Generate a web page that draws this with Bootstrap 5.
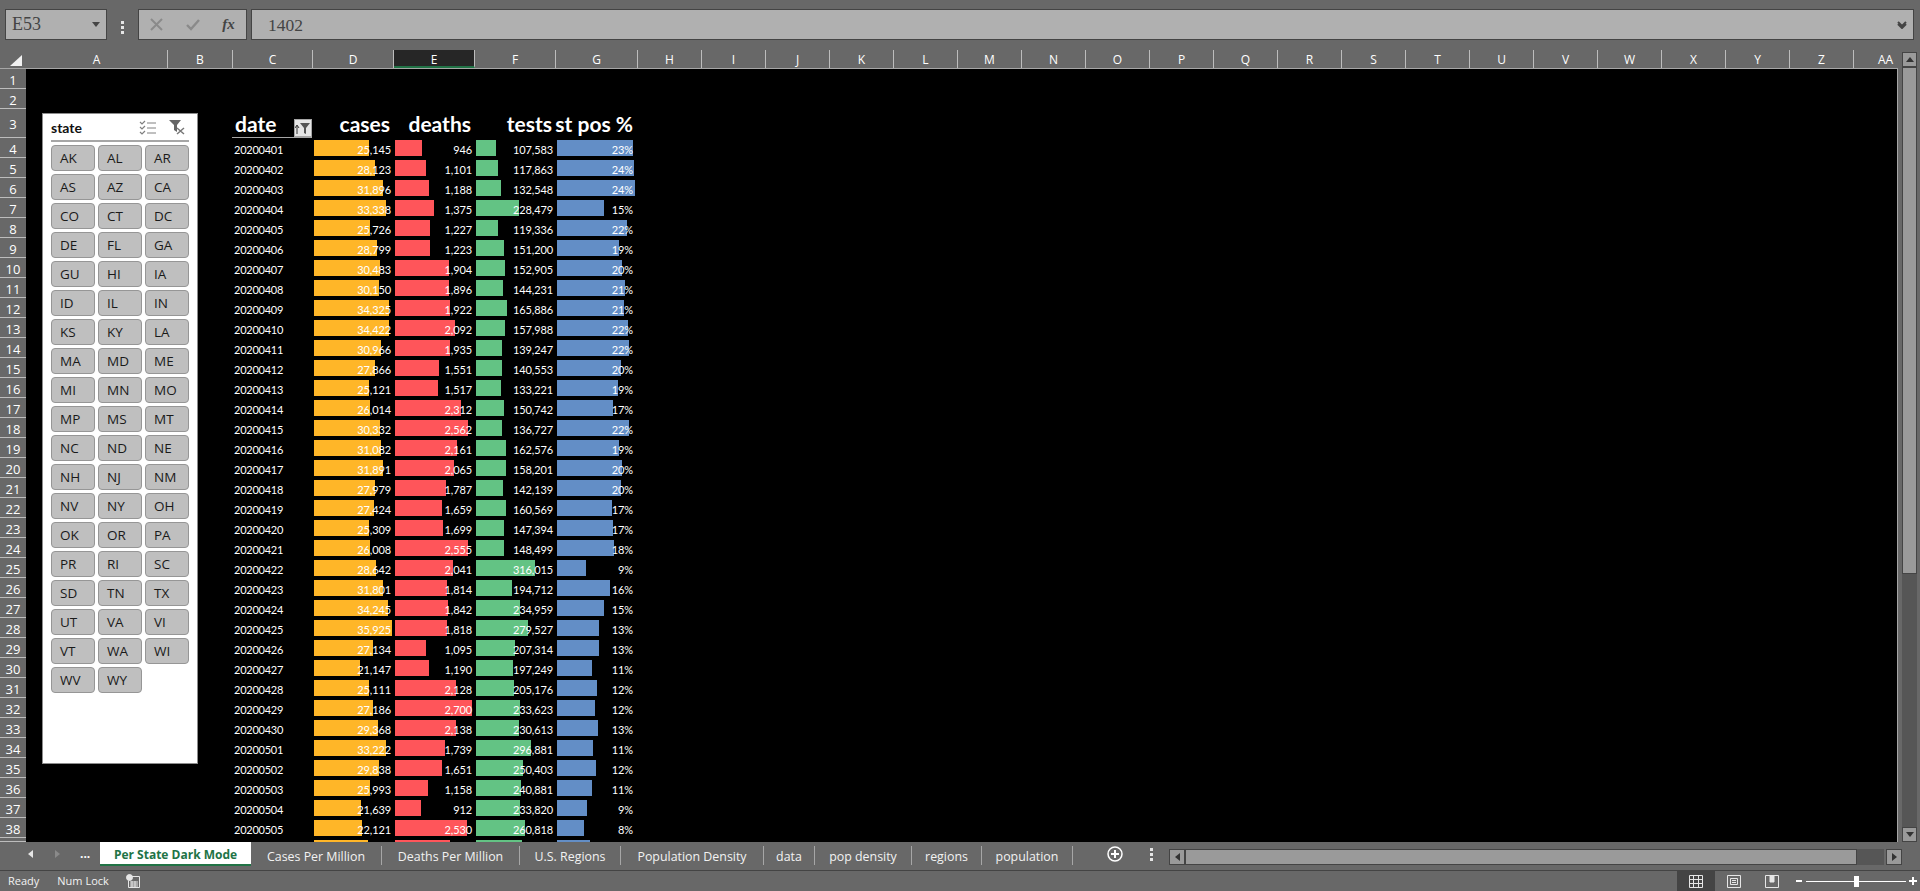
<!DOCTYPE html>
<html lang="en">
<head>
    <meta charset="UTF-8">
    <meta name="viewport" content="width=device-width, initial-scale=1.0">
    <title>Per State Dark Mode</title>
    <link href="https://cdn.jsdelivr.net/npm/bootstrap@5.3.0/dist/css/bootstrap.min.css" rel="stylesheet">
    <style>
        html, body { height: 100%; overflow: hidden; }
        body { background: #686868; color: #fff; font-family: "Open Sans", sans-serif; font-size: 12px; }

        /* formula bar */
        .fbar { height: 50px; padding: 9px 6px 0 5px; }
        .fbox { height: 31px; background: #b0b0b0; border: 1px solid #444; color: #444; }
        .namebox { width: 102px; padding-left: 6px; font: 18px "Liberation Serif", serif; }
        .caret-down { width: 0; height: 0; border: 4px solid transparent; border-top: 5px solid #444; border-bottom: 0; margin-right: 6px; }
        .vdots { width: 31px; }
        .fxbox { width: 109px; margin-right: 4px; }
        .fx-sym { font: italic bold 15px "Liberation Serif", serif; color: #444; }
        .formula { padding-left: 16px; padding-right: 6px; font: 17.5px "Liberation Serif", serif; }
        .formula-val { padding-top: 2px; }

        /* column letters */
        .colhead { height: 19px; border-bottom: 1px solid #a6a6a6; }
        .corner { width: 26px; }
        .col-l { flex: none; text-align: center; border-right: 1px solid #bdbdbd; line-height: 20px; }
        .col-l.is-sel { background: #262626; border-bottom: 2px solid #217346; }
        .col-a { width: 142px; } .col-b { width: 65px; } .col-c { width: 80px; } .col-d { width: 81px; }
        .col-e { width: 81px; } .col-f { width: 81px; } .col-g { width: 82px; } .col-n { width: 64px; }

        /* sheet */
        .sheet { height: 773px; background: #000; border-right: 1px solid #a6a6a6; }
        .xrow { height: 20px; }
        .xrow.is-head { height: 29px; }
        .xrow.is-cut { height: 4px; }
        .rownum { flex: none; width: 26px; height: 100%; background: #686868; border-bottom: 1px solid #bdbdbd; text-align: center; font-size: 13px; line-height: 22px; }
        .is-head .rownum { line-height: 30px; }
        .spacer { flex: none; width: 206px; }
        .cell { flex: none; text-align: right; padding-right: 2px; white-space: nowrap; font: 11px/23px Lato, sans-serif; letter-spacing: -.1px; background-repeat: no-repeat; background-position: 2px 2px; }
        .c-date { width: 80px; padding-left: 2px; text-align: left; letter-spacing: -.25px; }
        .c-cases { width: 81px; background-image: linear-gradient(#ffb628, #ffb628); }
        .c-deaths { width: 81px; background-image: linear-gradient(#ff555a, #ff555a); }
        .c-tests { width: 81px; background-image: linear-gradient(#63c384, #63c384); }
        .c-pos { width: 82px; padding-right: 4px; background-image: linear-gradient(#638ec6, #638ec6); }
        .hcell { flex: none; font: bold 21px/30px Lato, sans-serif; text-align: right; padding-right: 3px; white-space: nowrap; }
        .h-date { width: 80px; border-bottom: 1px solid #a6a6a6; padding: 0 0 0 3px; }
        .h-date-label { margin-bottom: -2px; }
        .h-pos { width: 82px; padding-right: 4px; }
        .filter-btn { width: 18px; height: 18px; background: #e6e6e6; border: 1px solid #a6a6a6; }

        /* slicer */
        .slicer { position: absolute; left: 42px; top: 44px; width: 156px; height: 651px; background: #fff; border: 1px solid #8c8c8c; padding: 0 8px; }
        .slicer-head { height: 28px; border-bottom: 2px solid #a6a6a6; color: #111; font: bold 14px Lato, sans-serif; }
        .slicer-tools { gap: 13px; }
        .slicer-grid { display: grid; grid-template-columns: repeat(3, 1fr); grid-auto-rows: 26px; gap: 3px 3px; margin-top: 3px; }
        .slicer-btn { background: #bfbfbf; border: 1px solid #969696; border-radius: 4px; color: #1a1a1a; font: 13.5px/1 "Open Sans", sans-serif; text-align: left; padding: 2px 0 0 8px; }

        /* vertical scrollbar */
        .vscroll { flex: none; width: 22px; padding: 2px 3px 0 4px; height: 792px; }
        .sb-btn { background: #9a9a9a; border: 1px solid #444; }
        .sb-v { height: 15px; }
        .sb-thumb { height: 507px; background: #9a9a9a; border: 1px solid #444; }
        .sb-trough { background: #565656; }
        .tri { width: 0; height: 0; border: 4px solid transparent; }
        .tri-up { border-bottom: 5px solid #333; border-top: 0; }
        .tri-down { border-top: 5px solid #333; border-bottom: 0; }
        .tri-left { border-right: 5px solid #333; border-left: 0; }
        .tri-right { border-left: 5px solid #333; border-right: 0; }

        /* tabs */
        .tabbar { height: 29px; border-bottom: 1px solid #444; }
        .tabnav { width: 100px; height: 24px; }
        .tabnav .tri-left { margin-left: 28px; margin-right: 22px; border-right-color: #e6e6e6; }
        .tabnav .tri-right { margin-right: 20px; border-left-color: #8a8a8a; }
        .xtabs { height: 24px; }
        .xtab { flex: none; height: 19px; margin-top: 4px; border-right: 1px solid #a6a6a6; text-align: center; line-height: 22px; white-space: nowrap; color: #f2f2f2; font-size: 12.4px; }
        .xtab.is-on { height: 24px; margin-top: 0; width: 151px; background: #fff; color: #217346; font-size: 12px; font-weight: 700; border-right: 0; border-bottom: 2px solid #217346; line-height: 26px; }
        .xtab:nth-child(2) { width: 131px; } .xtab:nth-child(3) { width: 138px; } .xtab:nth-child(4) { width: 101px; }
        .xtab:nth-child(5) { width: 143px; } .xtab:nth-child(6) { width: 51px; } .xtab:nth-child(7) { width: 97px; }
        .xtab:nth-child(8) { width: 70px; } .xtab:nth-child(9) { width: 91px; }
        .tabtools { width: 96px; height: 24px; }
        .tab-plus { margin-left: 34px; }
        .tab-dots { margin-left: 27px; }
        .hscroll { height: 16px; margin-top: 7px; }
        .sb-h { width: 16px; height: 16px; flex: none; }
        .hthumb { width: 672px; flex: none; height: 16px; background: #9a9a9a; border: 1px solid #444; }
        .htrough { width: 27px; flex: none; height: 16px; background: #565656; margin-right: 2px; }

        /* status bar */
        .statusbar { height: 20px; padding-left: 8px; font-size: 11px; color: #f2f2f2; }
        .stat-lock { margin-left: 18px; }
        .stat-rec { margin-left: 17px; }
        .stat-views { margin-left: auto; }
        .viewbtn { width: 38px; height: 20px; flex: none; }
        .viewbtn.is-on { background: #444; }
        .zoom-minus { margin-left: 5px; }
        .zoomtrack { width: 100px; height: 1px; background: #fff; margin: 0 3px 0 4px; }
        .zoomthumb { position: absolute; left: 48px; top: -5px; width: 5px; height: 11px; background: #fff; }
        .zoom-plus { margin-right: 3px; }
    </style>
</head>
<body class="d-flex flex-column">
    <div class="fbar d-flex flex-shrink-0">
        <div class="fbox namebox d-flex align-items-center justify-content-between"><span>E53</span><span class="caret-down"></span></div>
        <div class="vdots d-flex align-items-center justify-content-center pb-1">
            <svg width="3" height="13" fill="#e6e6e6"><rect width="3" height="3"/><rect y="5" width="3" height="3"/><rect y="10" width="3" height="3"/></svg>
        </div>
        <div class="fbox fxbox d-flex align-items-center justify-content-around">
            <svg width="13" height="13" stroke="#8a8a8a" stroke-width="2" fill="none"><path d="M1 1l11 11M12 1L1 12"/></svg>
            <svg width="14" height="13" stroke="#8a8a8a" stroke-width="2.4" fill="none"><path d="M1 7l4 4 8-9"/></svg>
            <span class="fx-sym">fx</span>
        </div>
        <div class="fbox formula flex-grow-1 d-flex align-items-center justify-content-between">
            <span class="formula-val">1402</span>
            <svg width="10" height="8" stroke="#444" stroke-width="2" fill="none"><path d="M1 1l4 4 4-4M1 3l4 4 4-4"/></svg>
        </div>
    </div>

    <div class="d-flex flex-shrink-0">
        <div class="flex-grow-1 overflow-hidden">
            <div class="colhead d-flex" id="colhead">
                <div class="corner flex-shrink-0 d-flex justify-content-end align-items-start pt-1 pe-1">
                    <svg width="13" height="12" fill="#f2f2f2"><path d="M13 1v11H1z"/></svg>
                </div>
            </div>
            <div class="sheet position-relative overflow-hidden" id="sheet">
                <div class="slicer">
                    <div class="slicer-head d-flex align-items-center justify-content-between">
                        <span>state</span>
                        <span class="slicer-tools d-flex align-items-center pe-1">
                            <svg width="17" height="15" fill="none" stroke="#808080"><path d="M1 2l2 2 3-3M1 7l2 2 3-3M1 12l2 2 3-3" stroke-width="1.2"/><path d="M8 3h9M8 8h9M8 13h9"/></svg>
                            <svg width="16" height="16"><path d="M0 1h12L8 6v7l-3-2V6z" fill="#666"/><path d="M8 9l7 6M15 9l-7 6" stroke="#777" stroke-width="1.5"/></svg>
                        </span>
                    </div>
                    <div class="slicer-grid" id="states"></div>
                </div>
            </div>
        </div>
        <div class="vscroll d-flex flex-column">
            <div class="sb-btn sb-v d-flex align-items-center justify-content-center"><span class="tri tri-up"></span></div>
            <div class="sb-thumb"></div>
            <div class="sb-trough flex-grow-1"></div>
            <div class="sb-btn sb-v d-flex align-items-center justify-content-center"><span class="tri tri-down"></span></div>
        </div>
    </div>

    <div class="tabbar d-flex flex-shrink-0">
        <div class="tabnav d-flex align-items-center">
            <span class="tri tri-left"></span>
            <span class="tri tri-right"></span>
            <span class="fw-bold">...</span>
        </div>
        <div class="xtabs d-flex">
            <div class="xtab is-on">Per State Dark Mode</div>
            <div class="xtab">Cases Per Million</div>
            <div class="xtab">Deaths Per Million</div>
            <div class="xtab">U.S. Regions</div>
            <div class="xtab">Population Density</div>
            <div class="xtab">data</div>
            <div class="xtab">pop density</div>
            <div class="xtab">regions</div>
            <div class="xtab">population</div>
        </div>
        <div class="tabtools d-flex align-items-center">
            <svg class="tab-plus" width="16" height="16" fill="none" stroke="#fff" stroke-width="1.5"><circle cx="8" cy="8" r="7"/><path d="M8 4v8M4 8h8" stroke-width="2"/></svg>
            <svg class="tab-dots" width="3" height="13" fill="#e6e6e6"><rect width="3" height="3"/><rect y="5" width="3" height="3"/><rect y="10" width="3" height="3"/></svg>
        </div>
        <div class="hscroll d-flex">
            <div class="sb-btn sb-h d-flex align-items-center justify-content-center"><span class="tri tri-left"></span></div>
            <div class="hthumb"></div>
            <div class="htrough"></div>
            <div class="sb-btn sb-h d-flex align-items-center justify-content-center"><span class="tri tri-right"></span></div>
        </div>
    </div>

    <div class="statusbar d-flex align-items-center flex-shrink-0">
        <span>Ready</span>
        <span class="stat-lock">Num Lock</span>
        <svg class="stat-rec" width="14" height="14" fill="none" stroke="#e6e6e6"><circle cx="3.5" cy="3.5" r="3" fill="#e6e6e6"/><path d="M6 2.500h7.500v11h-11v-7M4 8h8M4 10h8M4 12h8M6 7v6M9 7v6"/></svg>
        <div class="viewbtn is-on stat-views d-flex align-items-center justify-content-center">
            <svg width="14" height="13" fill="none" stroke="#e6e6e6"><path d="M.5.500h13v12H.5zM.5 4.500h13M.5 8.500h13M4.500.500v12M9.500.500v12"/></svg>
        </div>
        <div class="viewbtn d-flex align-items-center justify-content-center">
            <svg width="14" height="13" fill="none" stroke="#e6e6e6"><path d="M.5.500h13v12H.5zM3.500 3.500h7v6h-7zM5 5.500h4M5 7.500h4"/></svg>
        </div>
        <div class="viewbtn d-flex align-items-center justify-content-center">
            <svg width="14" height="13" fill="none" stroke="#e6e6e6"><path d="M.5.500h13v12H.5z"/><path d="M5 1h4v6H5z" fill="#e6e6e6"/></svg>
        </div>
        <svg class="zoom-minus" width="6" height="2" fill="#fff"><rect width="6" height="2"/></svg>
        <div class="zoomtrack position-relative"><span class="zoomthumb"></span></div>
        <svg class="zoom-plus" width="8" height="8" fill="#fff"><path d="M3 0h2v3h3v2H5v3H3V5H0V3h3z"/></svg>
    </div>

    <script>
        const cases = [25145,28123,31896,33338,25726,28799,30483,30150,34325,34422,30966,27866,25121,26014,30332,31082,31891,27979,27424,25309,26008,28642,31801,34245,35925,27134,21147,25111,27186,29368,33222,29838,25993,21639,22121];
        const deaths = [946,1101,1188,1375,1227,1223,1904,1896,1922,2092,1935,1551,1517,2312,2562,2161,2065,1787,1659,1699,2555,2041,1814,1842,1818,1095,1190,2128,2700,2138,1739,1651,1158,912,2530];
        const tests = [107583,117863,132548,228479,119336,151200,152905,144231,165886,157988,139247,140553,133221,150742,136727,162576,158201,142139,160569,147394,148499,316015,194712,234959,279527,207314,197249,205176,233623,230613,296881,250403,240881,233820,260818];
        const pct = [23,24,24,15,22,19,20,21,21,22,22,20,19,17,22,19,20,20,17,17,18,9,16,15,13,13,11,12,12,13,11,12,11,9,8];
        // pixel lengths of the positive % bars, the real values had more decimals
        const posBar = [76,77,78,47,70,62,65,68,67,71,72,64,61,56,72,62,65,64,55,56,57,29,53,47,42,42,35,40,38,41,36,39,35,30,27];
        const states = 'AK AL AR AS AZ CA CO CT DC DE FL GA GU HI IA ID IL IN KS KY LA MA MD ME MI MN MO MP MS MT NC ND NE NH NJ NM NV NY OH OK OR PA PR RI SC SD TN TX UT VA VI VT WA WI WV WY'.split(' ');
        const columns = 'A B C D E F G H I J K L M N O P Q R S T U V W X Y Z AA'.split(' ');

        const fmt = n => n.toLocaleString('en-US');
        const bar = (v, max, w) => `background-size:${Math.round(v / max * w)}px 16px`;

        document.getElementById('colhead').insertAdjacentHTML('beforeend', columns.map((c, i) => {
            const width = i < 7 ? 'col-' + c.toLowerCase() : 'col-n';
            return `<div class="col-l ${width}${c === 'E' ? ' is-sel' : ''}">${c}</div>`;
        }).join(''));

        document.getElementById('states').innerHTML = states.map(s => `<button class="btn slicer-btn">${s}</button>`).join('');

        const funnel = `<svg width="16" height="16"><path d="M2 14V6M2 5L0 8M2 5l2 3" stroke="#333" fill="none"/><path d="M5 3h10l-4 5v6l-2-1V8z" fill="#555"/></svg>`;
        let html = '';
        html += '<div class="xrow d-flex"><div class="rownum">1</div></div>';
        html += '<div class="xrow d-flex"><div class="rownum">2</div></div>';
        html += `<div class="xrow is-head d-flex"><div class="rownum">3</div><div class="spacer"></div>
            <div class="hcell h-date d-flex justify-content-between align-items-end"><span class="h-date-label">date</span><span class="filter-btn d-flex align-items-center justify-content-center">${funnel}</span></div>
            <div class="hcell col-d">cases</div><div class="hcell col-e">deaths</div><div class="hcell col-f">tests</div><div class="hcell h-pos">st pos %</div></div>`;
        cases.forEach((c, i) => {
            const date = 20200401 + (i < 30 ? i : 70 + i);
            html += `<div class="xrow d-flex"><div class="rownum">${i + 4}</div><div class="spacer"></div>
                <div class="cell c-date">${date}</div>
                <div class="cell c-cases" style="${bar(c, 35925, 78)}">${fmt(c)}</div>
                <div class="cell c-deaths" style="${bar(deaths[i], 2700, 77)}">${fmt(deaths[i])}</div>
                <div class="cell c-tests" style="${bar(tests[i], 316015, 59)}">${fmt(tests[i])}</div>
                <div class="cell c-pos" style="background-size:${posBar[i]}px 16px">${pct[i]}%</div></div>`;
        });
        // row 39 is cut off by the tab bar, only the top of its bars shows
        html += `<div class="xrow is-cut d-flex overflow-hidden"><div class="rownum"></div><div class="spacer"></div><div class="cell c-date"></div>
            <div class="cell c-cases" style="background-size:54px 16px"></div><div class="cell c-deaths" style="background-size:55px 16px"></div>
            <div class="cell c-tests" style="background-size:46px 16px"></div><div class="cell c-pos" style="background-size:33px 16px"></div></div>`;
        document.getElementById('sheet').insertAdjacentHTML('afterbegin', html);
    </script>
    <script src="https://cdn.jsdelivr.net/npm/bootstrap@5.3.0/dist/js/bootstrap.bundle.min.js"></script>
</body>
</html>
